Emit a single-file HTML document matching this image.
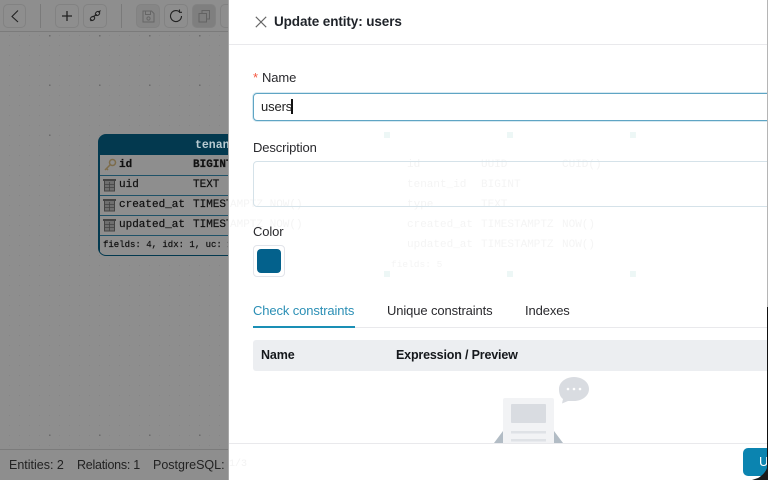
<!DOCTYPE html>
<html><head><meta charset="utf-8"><style>
html,body{margin:0;padding:0;width:768px;height:480px;overflow:hidden;background:#8e8e8e}
*{box-sizing:border-box}
body{font-family:"Liberation Sans",sans-serif;position:relative}
#wrap{position:absolute;left:0;top:0;width:768px;height:480px;filter:blur(.35px)}
.abs{position:absolute}
.btn{position:absolute;top:4px;width:24px;height:24px;border:1px solid #828282;border-radius:5px;background:#8e8e8e}
.sep{position:absolute;top:4px;width:1px;height:24px;background:#7a7a7a}
.mono{font-family:"Liberation Mono",monospace;font-size:11px;white-space:pre;position:absolute;color:#111;line-height:14px;-webkit-text-stroke:.2px #111}
.row{position:absolute;left:1px;width:130px;height:20px;background:#8e8e8e;border-top:1px solid #1f5268}
.ghost{font-family:"Liberation Mono",monospace;font-size:11px;line-height:14px;white-space:pre;position:absolute;color:#f1f1f1}
.t{position:absolute;white-space:nowrap;font-size:13px;color:#2a2a2e;line-height:16px;letter-spacing:-.12px}
.dot{position:absolute;width:6px;height:6px;background:#e8f5f3}
.st{position:absolute;top:458px;font-size:12.500px;color:#222;white-space:nowrap}
</style></head><body><div id="wrap">

<!-- canvas -->
<svg class="abs" style="left:0;top:0" width="229" height="480">
<defs><pattern id="d" x="0" y="0" width="10" height="10" patternUnits="userSpaceOnUse"><rect x="9" y="5" width="1" height="1" fill="#858585"/></pattern></defs>
<rect x="0" y="32" width="229" height="416" fill="url(#d)"/>
<g fill="#6a6a6a"><rect x="49" y="35" width="1.5" height="1.5"/><rect x="99" y="35" width="1.5" height="1.5"/><rect x="149" y="35" width="1.5" height="1.5"/><rect x="199" y="35" width="1.5" height="1.5"/><rect x="49" y="84.500" width="1.5" height="1.5"/><rect x="99" y="84.500" width="1.5" height="1.5"/><rect x="149" y="84.500" width="1.5" height="1.5"/><rect x="199" y="84.500" width="1.5" height="1.500"/><rect x="49" y="134.500" width="1.5" height="1.5"/><rect x="49" y="434.500" width="1.5" height="1.5"/><rect x="99" y="434.500" width="1.5" height="1.5"/><rect x="149" y="434.500" width="1.5" height="1.5"/><rect x="199" y="434.500" width="1.5" height="1.5"/></g>
<rect x="0" y="31" width="229" height="1" fill="#7b7b7b"/>
<rect x="0" y="449" width="229" height="1" fill="#7b7b7b"/>
</svg>

<!-- toolbar -->
<div class="btn" style="left:3px;width:23px"></div>
<svg class="abs" style="left:9px;top:9px" width="12" height="14"><path d="M9 1.500L3 7.500L9 13" fill="none" stroke="#222" stroke-width="1.100"/></svg>
<div class="sep" style="left:40px"></div>
<div class="btn" style="left:55px"></div>
<svg class="abs" style="left:61px;top:10px" width="12" height="12"><path d="M6 1V11M1 6H11" stroke="#222" stroke-width="1.300"/></svg>
<div class="btn" style="left:83px"></div>
<svg class="abs" style="left:88px;top:9px" width="14" height="14"><path d="M4.500 8L9 5.500M2.500 12L4 10.500M10.500 3.500L12.500 1.500" stroke="#222" stroke-width="1.100" fill="none"/><ellipse cx="4.500" cy="9.500" rx="2.400" ry="1.800" transform="rotate(-40 4.500 9.500)" fill="none" stroke="#222" stroke-width="1.100"/><ellipse cx="9.500" cy="4.500" rx="2.400" ry="1.800" transform="rotate(-40 9.500 4.500)" fill="none" stroke="#222" stroke-width="1.100"/></svg>
<div class="sep" style="left:121px"></div>
<div class="btn" style="left:136px;background:#868686"></div>
<svg class="abs" style="left:142px;top:10px" width="13" height="13"><path d="M1 1H9.500L12 3.500V12H1ZM3.500 1V4.500H8.500V1" fill="none" stroke="#666" stroke-width="1"/><circle cx="6.500" cy="8.500" r="1.600" fill="none" stroke="#666"/></svg>
<div class="btn" style="left:164px"></div>
<svg class="abs" style="left:169px;top:9px" width="14" height="14"><path d="M12.500 7A5.500 5.500 0 1 1 10.500 2.800M10.500 .5V3.300H13" fill="none" stroke="#222" stroke-width="1.100"/></svg>
<div class="btn" style="left:192px;background:#7f7f7f"></div>
<svg class="abs" style="left:198px;top:9px" width="13" height="14"><path d="M1 4.500H8.500V13H1ZM4 4V1.500H11.500V10H9" fill="none" stroke="#636363" stroke-width="1"/></svg>
<div class="btn" style="left:220px"></div>

<!-- table node -->
<div class="abs" style="left:98px;top:134px;width:140px;height:122px;border-radius:8px;background:#03394f;overflow:hidden;border:1px solid #03394f">
 <div class="mono" style="left:96px;top:4px;color:#b9cbd2;-webkit-text-stroke:0;font-weight:bold;font-size:11.500px">tenants</div>
 <div class="row" style="top:20px;height:20px;border-top:0"></div>
 <div class="row" style="top:40px"></div>
 <div class="row" style="top:60px"></div>
 <div class="row" style="top:80px"></div>
 <div class="row" style="top:100px;height:21px"></div>
</div>
<svg class="abs" style="left:103px;top:158px" width="14" height="14"><circle cx="9.500" cy="4.500" r="3" fill="none" stroke="#7d6c4a" stroke-width="1.500"/><path d="M7.500 6.500L2 12M3.500 10.500L5 12" stroke="#7d6c4a" stroke-width="1.500" fill="none"/></svg>
<svg class="abs" style="left:103px;top:178px" width="13" height="14"><path d="M0 1H13V3H0Z" fill="#444"/><path d="M1.500 3V13H11.500V3" fill="#6f6f6f" stroke="#444"/><path d="M2 6.500H11M2 9.500H11M6.500 4V13" stroke="#444" stroke-width=".8"/></svg>
<svg class="abs" style="left:103px;top:198px" width="13" height="14"><path d="M0 1H13V3H0Z" fill="#444"/><path d="M1.500 3V13H11.500V3" fill="#6f6f6f" stroke="#444"/><path d="M2 6.500H11M2 9.500H11M6.500 4V13" stroke="#444" stroke-width=".8"/></svg>
<svg class="abs" style="left:103px;top:218px" width="13" height="14"><path d="M0 1H13V3H0Z" fill="#444"/><path d="M1.500 3V13H11.500V3" fill="#6f6f6f" stroke="#444"/><path d="M2 6.500H11M2 9.500H11M6.500 4V13" stroke="#444" stroke-width=".8"/></svg>
<div class="mono" style="left:119px;top:158px;font-weight:bold">id</div>
<div class="mono" style="left:193px;top:158px;font-weight:bold">BIGINT</div>
<div class="mono" style="left:119px;top:178px">uid</div>
<div class="mono" style="left:193px;top:178px">TEXT</div>
<div class="mono" style="left:119px;top:198px">created_at</div>
<div class="mono" style="left:193px;top:198px">TIMESTAMPTZ</div>
<div class="mono" style="left:119px;top:218px">updated_at</div>
<div class="mono" style="left:193px;top:218px">TIMESTAMPTZ</div>
<div class="mono" style="left:103px;top:238px;font-size:9px">fields: 4, idx: 1, uc: 1</div>

<!-- status -->
<div class="st" style="left:9px">Entities: 2</div>
<div class="st" style="left:77px;letter-spacing:-.25px">Relations: 1</div>
<div class="st" style="left:153px">PostgreSQL:</div>

<!-- drawer -->
<div class="abs" style="left:228px;top:0;width:540px;height:480px;background:#fff;overflow:hidden;border-left:1px solid #a8a8a8">
 <div style="position:absolute;left:-229px;top:0;width:768px;height:480px;opacity:.75">
 <div class="ghost" style="left:230px;top:198px">AMPTZ NOW()</div>
 <div class="ghost" style="left:230px;top:218px">AMPTZ NOW()</div>
 <div class="ghost" style="left:407px;top:158px">id</div><div class="ghost" style="left:481px;top:158px">UUID</div><div class="ghost" style="left:562px;top:158px">CUID()</div>
 <div class="ghost" style="left:407px;top:178px">tenant_id</div><div class="ghost" style="left:481px;top:178px">BIGINT</div>
 <div class="ghost" style="left:407px;top:198px">type</div><div class="ghost" style="left:481px;top:198px">TEXT</div>
 <div class="ghost" style="left:407px;top:218px">created_at</div><div class="ghost" style="left:481px;top:218px">TIMESTAMPTZ</div><div class="ghost" style="left:562px;top:218px">NOW()</div>
 <div class="ghost" style="left:407px;top:238px">updated_at</div><div class="ghost" style="left:481px;top:238px">TIMESTAMPTZ</div><div class="ghost" style="left:562px;top:238px">NOW()</div>
 <div class="ghost" style="left:391px;top:258px;font-size:9.500px">fields: 5</div>
 <div class="dot" style="left:384px;top:132px"></div><div class="dot" style="left:507px;top:132px"></div><div class="dot" style="left:630px;top:132px"></div>
 <div class="dot" style="left:384px;top:271px"></div><div class="dot" style="left:507px;top:271px"></div><div class="dot" style="left:630px;top:271px"></div>
 </div>

 <svg class="abs" style="left:26px;top:16px" width="12" height="12"><path d="M.8 .8L11.200 11.200M11.200 .8L.8 11.200" stroke="#666" stroke-width="1.100"/></svg>
 <div class="t" style="left:45px;top:14px;font-weight:bold;font-size:13.500px;color:#1f2329;letter-spacing:-.1px">Update entity: users</div>
 <div class="abs" style="left:0;top:44px;width:540px;height:1px;background:#e9e9ec"></div>

 <div class="t" style="left:24px;top:70px;color:#f5563f;font-size:13px">*</div>
 <div class="t" style="left:33px;top:70px">Name</div>
 <div class="abs" style="left:24px;top:93px;width:530px;height:28px;border:1px solid #5fa5c4;border-radius:4px;box-shadow:0 0 0 1px #d7e9f1;background:#fff"></div>
 <div class="t" style="left:32px;top:99px;color:#222">users</div>
 <div class="abs" style="left:62px;top:99px;width:1.500px;height:15px;background:#111"></div>

 <div class="t" style="left:24px;top:140px">Description</div>
 <div class="abs" style="left:24px;top:161px;width:530px;height:46px;border:1px solid #d5e2e9;border-radius:4px"></div>

 <div class="t" style="left:24px;top:224px">Color</div>
 <div class="abs" style="left:24px;top:245px;width:32px;height:32px;border:1px solid #e2e4ea;border-radius:4px"></div>
 <div class="abs" style="left:28px;top:249px;width:24px;height:24px;background:#03618c;border-radius:4px"></div>

 <div class="t" style="left:24px;top:303px;color:#2b8fb5">Check constraints</div>
 <div class="t" style="left:158px;top:303px">Unique constraints</div>
 <div class="t" style="left:296px;top:303px">Indexes</div>
 <div class="abs" style="left:24px;top:327px;width:516px;height:1px;background:#e9e9ec"></div>
 <div class="abs" style="left:24px;top:326px;width:102px;height:2px;background:#1a8fb5"></div>

 <div class="abs" style="left:24px;top:340px;width:514px;height:31px;background:#eceef1;border-radius:3px 0 0 3px"></div>
 <div class="t" style="left:32px;top:347px;font-weight:bold;color:#15181c;font-size:12.500px">Name</div>
 <div class="t" style="left:167px;top:347px;font-weight:bold;color:#15181c;font-size:12.500px;letter-spacing:-.17px">Expression / Preview</div>

 <svg class="abs" style="left:260px;top:375px" width="110" height="70">
  <path d="M14 56V68H5Z" fill="#b2bcc5"/>
  <path d="M65 56V68H74Z" fill="#b2bcc5"/>
  <rect x="14" y="23" width="51" height="47" rx="2" fill="#f2f3f5"/>
  <rect x="22" y="29" width="35" height="19" rx="1" fill="#d9dce1"/>
  <rect x="22" y="56" width="35" height="2.500" fill="#dfe2e6"/>
  <rect x="22" y="64" width="35" height="2.500" fill="#dfe2e6"/>
  <path d="M85 2C93 2 100 7 100 14C100 21 93 26 85 26H79L73 28.500L74 24C71 22 70 18 70 14C70 7 77 2 85 2Z" fill="#d9dce1"/>
  <circle cx="79" cy="14" r="1.300" fill="#fff"/><circle cx="85" cy="14" r="1.300" fill="#fff"/><circle cx="91" cy="14" r="1.300" fill="#fff"/>
 </svg>

 <div class="abs" style="left:0;top:443px;width:540px;height:37px;background:#fff;border-top:1px solid #e9e9ec"></div>
 <div class="ghost" style="left:0;top:458px;color:#f3f3f3;font-size:10px">1/3</div>
 <div class="abs" style="left:514px;top:448px;width:40px;height:28px;background:#0b84b0;border-radius:5px;color:#fff;font-size:13px;line-height:28px;padding-left:16px">U</div>
</div>
</div>
<div class="abs" style="left:767px;top:0;width:1px;height:307px;background:#b5b5b5"></div>
<div class="abs" style="left:767px;top:307px;width:1px;height:173px;background:#111"></div>
<svg class="abs" style="left:752px;top:464px" width="16" height="16"><path d="M16 0C15 7 11 11 6 14L0 16H16Z" fill="#1b1b1b"/></svg>
</body></html>
